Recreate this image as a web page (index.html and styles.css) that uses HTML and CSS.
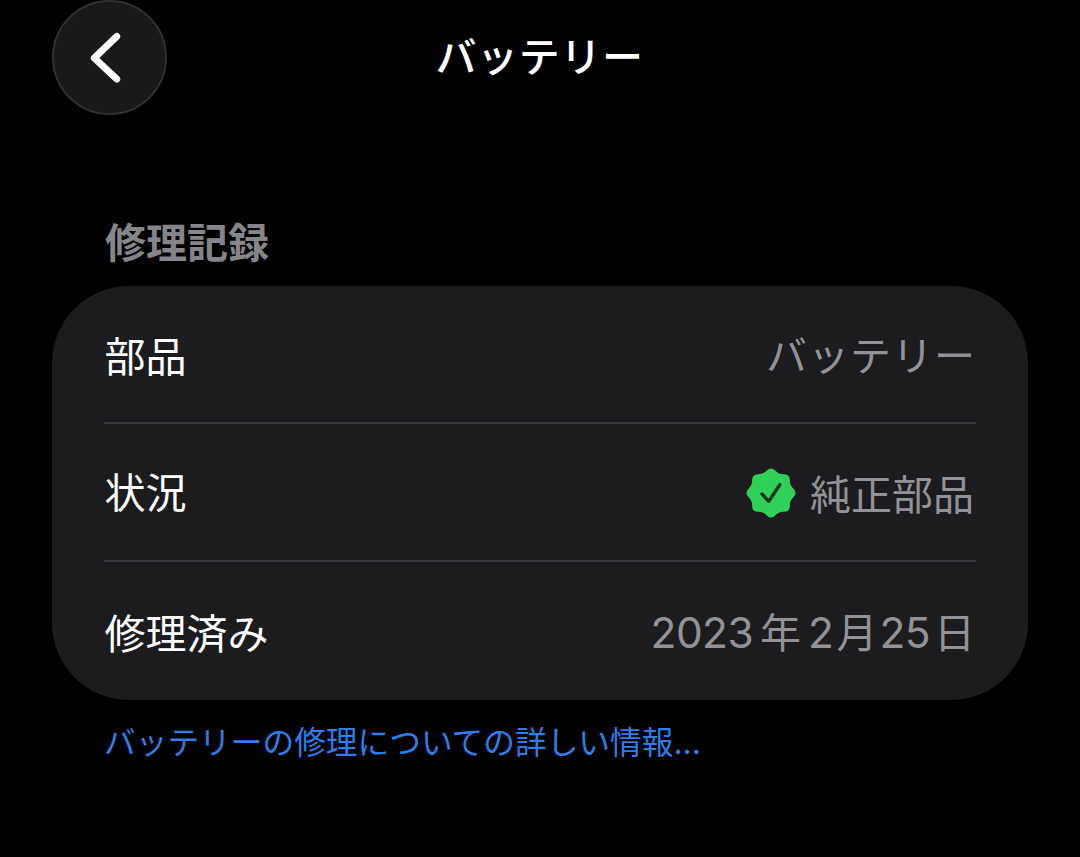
FILE: index.html
```html
<!DOCTYPE html>
<html lang="ja">
  <head>
    <meta charset="utf-8">
    <title>バッテリー</title>
    <link rel="stylesheet" href="styles.css">
  </head>
  <body>
    <header class="navbar">
      <button class="back" aria-label="戻る">
        <svg width="111" height="111" viewBox="0 0 111 111">
          <path d="M62.700 34.500 L40.300 56 L62.700 77" fill="none" stroke="#fff" stroke-width="7" stroke-linecap="round" stroke-linejoin="round"/>
        </svg>
      </button>
      <h1 class="title">バッテリー</h1>
    </header>
    <main>
      <h2 class="section-title">修理記録</h2>
      <div class="card">
        <div class="row">
          <span class="label">部品</span>
          <span class="value kana">バッテリー</span>
        </div>
        <div class="row status">
          <span class="label">状況</span>
          <span class="value">
            <svg class="seal" width="50" height="50" viewBox="0 0 50 50">
              <path d="M47.700 21.050 Q51.400 25 47.700 28.950 Q43.500 32.700 43.850 38.300 Q43.700 43.700 38.300 43.850 Q32.700 43.500 28.950 47.700 Q25 51.400 21.050 47.700 Q17.300 43.500 11.700 43.850 Q6.300 43.700 6.150 38.300 Q6.500 32.700 2.300 28.950 Q-1.400 25 2.300 21.050 Q6.500 17.300 6.150 11.700 Q6.300 6.300 11.700 6.150 Q17.300 6.500 21.050 2.300 Q25 -1.400 28.950 2.300 Q32.700 6.500 38.300 6.150 Q43.700 6.300 43.850 11.700 Q43.500 17.300 47.700 21.050 Z" fill="#30d158"/>
              <path d="M16 26 L22.700 33.300 L34 16.500" fill="none" stroke="#0b3516" stroke-width="3.300" stroke-linecap="round" stroke-linejoin="round"/>
            </svg>
            <span>純正部品</span>
          </span>
        </div>
        <div class="row">
          <span class="label">修理済み</span>
          <span class="value date"><span class="num year">2023</span>年<span class="num month">2</span>月<span class="num day">25</span>日</span>
        </div>
      </div>
      <a class="more">バッテリーの修理についての詳しい情報...</a>
    </main>
  </body>
</html>
```

FILE: styles.css
```css
* {
  box-sizing: border-box;
  margin: 0;
  padding: 0;
}

body {
  width: 1080px;
  height: 857px;
  overflow: hidden;
  background: #000;
  color: #fff;
  font-family: Inter, "Noto Sans CJK JP", sans-serif;
  padding: 0 52px;
}

.navbar {
  display: grid;
  grid-template-columns: 115px 1fr 115px;
  align-items: center;
  height: 115px;
}

.back {
  width: 115px;
  height: 115px;
  border: 2px solid #303031;
  border-radius: 50%;
  background: #19191a;
}

.back svg {
  display: block;
}

.title {
  padding: 0 1px 1px 0;
  font-size: 41px;
  font-weight: 500;
  letter-spacing: 0.6px;
  line-height: 60px;
  text-align: center;
}

.section-title {
  margin-top: 98px;
  padding-left: 53px;
  font-size: 41px;
  font-weight: 700;
  line-height: 60px;
  color: #85858b;
}

.card {
  display: grid;
  grid-template-rows: 135.5px 138px 140.5px;
  height: 414px;
  margin-top: 13px;
  padding: 0 52px;
  border-radius: 77px;
  background: #1c1c1e;
}

.row {
  display: flex;
  justify-content: space-between;
  align-items: center;
  font-size: 41px;
}

.row + .row {
  border-top: 2px solid #37373b;
}

.label {
  padding-left: 0.5px;
}

.value {
  display: flex;
  align-items: center;
  padding-right: 2px;
  color: #929298;
}

.kana {
  padding: 0 0 2px;
  letter-spacing: 1px;
}

.status .label {
  padding-bottom: 4px;
}

.seal {
  margin: 2px 14px 0 0;
}

.date {
  align-items: baseline;
  padding: 0 1px 1px 0;
}

.num {
  font-size: 42.5px;
  letter-spacing: -0.6px;
}

.year {
  margin-right: 7px;
}

.month {
  margin: 0 3px 0 7px;
}

.day {
  margin: 0 4px 0 2px;
}

.more {
  display: block;
  margin: 21px 0 0 52px;
  font-size: 31.7px;
  line-height: 44px;
  color: #2f7de8;
}
```
